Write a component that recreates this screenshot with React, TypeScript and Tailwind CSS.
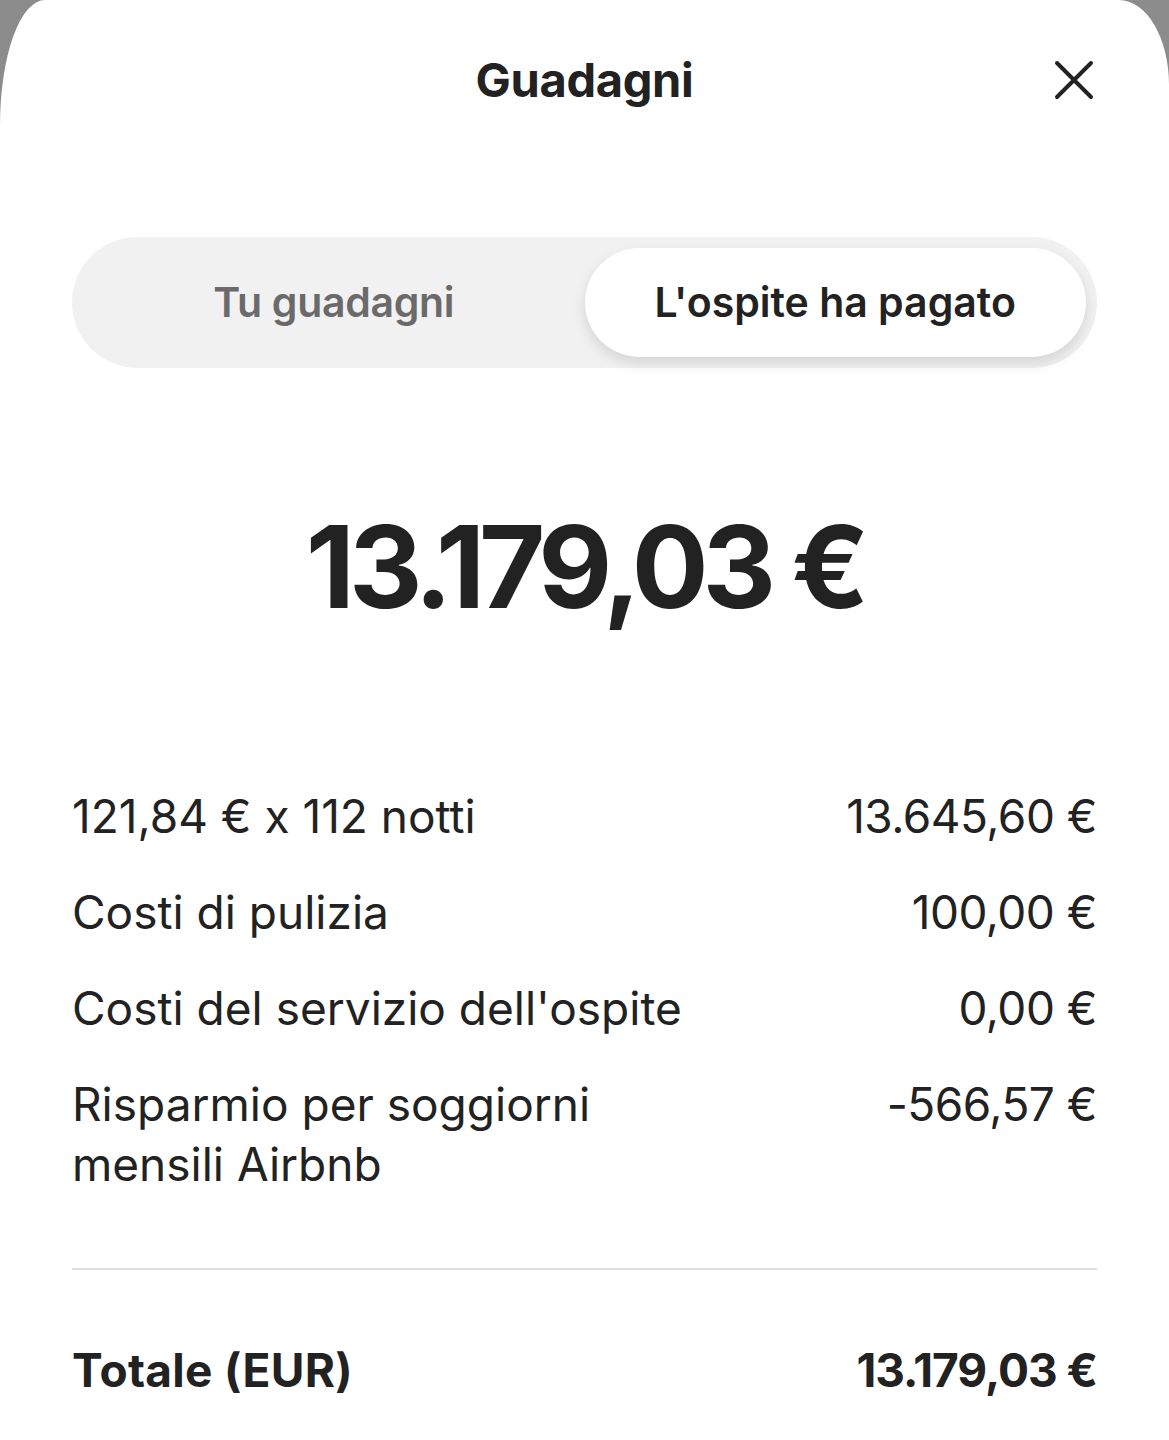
import React from 'react';

interface LineItem {
    label: React.ReactNode;
    amount: string;
}

const items: LineItem[] = [
    { label: '121,84 € x 112 notti', amount: '13.645,60 €' },
    { label: 'Costi di pulizia', amount: '100,00 €' },
    { label: "Costi del servizio dell'ospite", amount: '0,00 €' },
    { label: <>Risparmio per soggiorni<br />mensili Airbnb</>, amount: '-566,57 €' },
];

const CloseIcon = () => (
    <svg width="40" height="40" viewBox="0 0 40 40" fill="none" stroke="#222222" strokeWidth="4" strokeLinecap="round">
        <path d="M3 3 L37 37 M37 3 L3 37" />
    </svg>
);

export default function App() {
    return (
        <div className="min-h-[1440px] w-full bg-[#8c8c8c] font-['Inter',sans-serif] text-[#222222]">
            <div className="h-[1440px] bg-white rounded-tl-[45px_125px] rounded-tr-[50px_85px] overflow-hidden">
                {/* header */}
                <div className="relative h-[160px] flex items-center justify-center">
                    <h1 className="text-[47px] font-bold tracking-[-0.3px]">Guadagni</h1>
                    <button className="absolute right-[75px] top-[60px]">
                        <CloseIcon />
                    </button>
                </div>

                {/* toggle */}
                <div className="mx-[72px] mt-[77px] h-[131px] rounded-full bg-[#f1f1f1] p-[11px] grid grid-cols-2">
                    <div className="flex items-center justify-center text-[41px] font-semibold text-[#6a6a6a] tracking-[-0.3px]">
                        Tu guadagni
                    </div>
                    <div className="flex items-center justify-center rounded-full bg-white text-[41px] font-semibold tracking-[0px] shadow-[0_6px_14px_rgba(0,0,0,0.12)]">
                        L'ospite ha pagato
                    </div>
                </div>

                {/* amount */}
                <div className="mt-[142px] flex justify-center">
                    <span className="text-[114px] font-bold leading-none tracking-[-6px]">13.179,03 €</span>
                </div>

                {/* line items */}
                <div className="mx-[72px] mt-[162px] flex flex-col gap-[36px]">
                    {items.map((item, i) => (
                        <div key={i} className="flex justify-between text-[46px] leading-[60px]">
                            <span>{item.label}</span>
                            <span className="tracking-[-0.5px]">{item.amount}</span>
                        </div>
                    ))}
                </div>

                <div className="mx-[72px] mt-[74px] border-t-2 border-[#dddddd]" />

                <div className="mx-[72px] mt-[70px] flex justify-between text-[46px] font-bold leading-[60px]">
                    <span className="tracking-[0.3px]">Totale (EUR)</span>
                    <span className="tracking-[-1px]">13.179,03 €</span>
                </div>
            </div>
        </div>
    );
}
